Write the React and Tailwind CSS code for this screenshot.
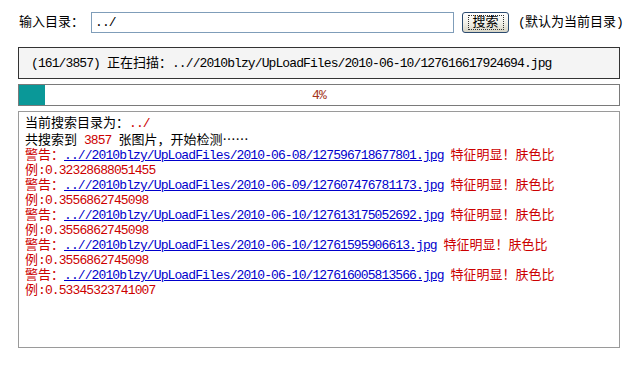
import React from "react";

const FONT = { fontFamily: '"Liberation Mono", "Noto Sans CJK SC", monospace' };

function T({ s }) {
  const parts = s.split(/([\x00-\x7F]+)/).filter((p) => p.length);
  return (
    <>
      {parts.map((p, i) =>
        /^[\x00-\x7F]+$/.test(p) ? (
          <span key={i} className="tracking-[-0.9px] whitespace-pre">
            {p}
          </span>
        ) : (
          <span key={i}>{p}</span>
        )
      )}
    </>
  );
}

const warnings = [
  ["..//2010blzy/UpLoadFiles/2010-06-08/127596718677801.jpg", "0.32328688051455"],
  ["..//2010blzy/UpLoadFiles/2010-06-09/127607476781173.jpg", "0.3556862745098"],
  ["..//2010blzy/UpLoadFiles/2010-06-10/127613175052692.jpg", "0.3556862745098"],
  ["..//2010blzy/UpLoadFiles/2010-06-10/12761595906613.jpg", "0.3556862745098"],
  ["..//2010blzy/UpLoadFiles/2010-06-10/127616005813566.jpg", "0.53345323741007"],
];

export default function App() {
  return (
    <div className="w-[633px] h-[368px] bg-white text-[13px] text-black overflow-hidden" style={FONT}>
      <div className="flex items-center pt-[11px] pl-[19px] h-[33px]">
        <span className="leading-[15px]">输入目录：</span>
        <div className="ml-[7px] w-[363px] h-[21px] border border-[#7f9db9] bg-white flex items-center pl-[3px] leading-[15px]">
          <T s="../" />
        </div>
        <div className="ml-[8px] w-[47px] h-[21px] rounded-[3px] border border-[#2b4a6f] bg-gradient-to-b from-[#ffffff] via-[#f2f1ea] to-[#d8d5c6] flex items-center justify-center">
          <div className="border border-dotted border-[#333] px-[4px] h-[15px] flex items-center leading-[13px]">
            搜索
          </div>
        </div>
        <span className="ml-[9px] leading-[15px]">
          <T s="(" />
          默认为当前目录
          <T s=")" />
        </span>
      </div>

      <div className="ml-[18px] w-[602px] mt-[14px] h-[32px] border border-[#333] bg-[#f4f4f4] flex items-center pl-[12px] leading-[15px]">
        <T s="(161/3857) 正在扫描：..//2010blzy/UpLoadFiles/2010-06-10/127616617924694.jpg" />
      </div>

      <div className="ml-[18px] w-[602px] mt-[5px] h-[22px] border border-[#7a7a7a] grid">
        <div className="col-start-1 row-start-1 w-[26px] h-full bg-[#0a9898]" />
        <div className="col-start-1 row-start-1 flex items-center justify-center text-[#a3331a] leading-[15px]">
          <T s="4%" />
        </div>
      </div>

      <div className="ml-[18px] w-[602px] mt-[5px] h-[237px] border border-[#9a9a9a] pt-[4px] pl-[6px] leading-[15px]">
        <div>
          <span>当前搜索目录为：</span>
          <span className="text-[#cc0000]">
            <T s="../" />
          </span>
        </div>
        <div>
          <span>共搜索到</span>
          <span className="text-[#cc0000]">
            <T s=" 3857 " />
          </span>
          <span>张图片，开始检测</span>
          <span className="font-['Noto_Sans_CJK_SC']">……</span>
        </div>
        {warnings.map(([link, ratio], i) => (
          <React.Fragment key={i}>
            <div className="text-[#cc0000] whitespace-nowrap">
              <span>警告：</span>
              <span className="text-[#0000cc] underline">
                <T s={link} />
              </span>
              <T s=" " />
              <span>特征明显！肤色比</span>
            </div>
            <div className="text-[#cc0000]">
              <T s={"例:" + ratio} />
            </div>
          </React.Fragment>
        ))}
      </div>
    </div>
  );
}
